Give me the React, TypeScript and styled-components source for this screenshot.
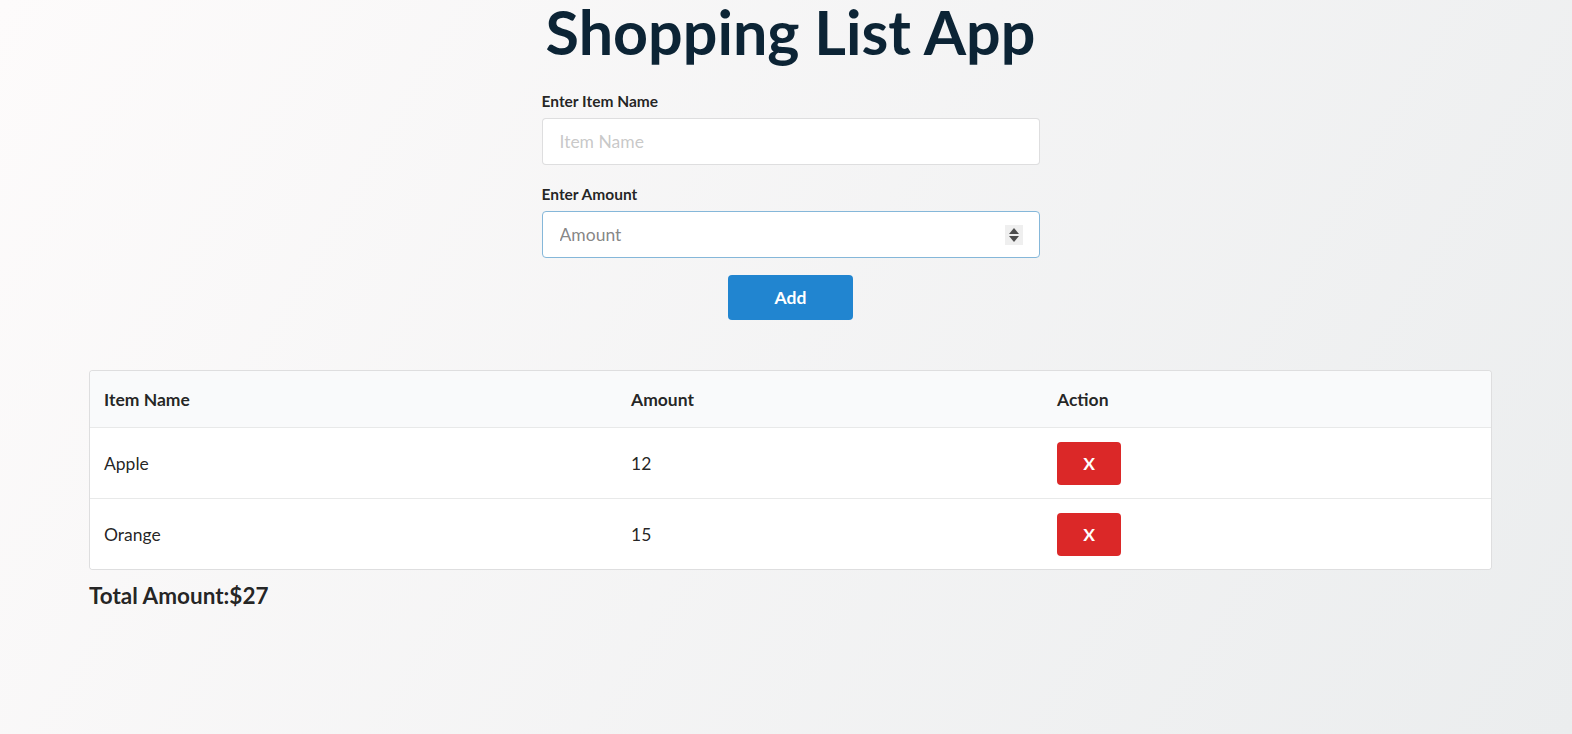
import React from "react";
import styled, { createGlobalStyle } from "styled-components";

const GlobalStyle = createGlobalStyle`
  html, body { margin: 0; padding: 0; }
  body {
    min-height: 734px;
    font-family: Lato, "Helvetica Neue", Arial, sans-serif;
    font-size: 17.5px;
    color: rgba(0,0,0,.87);
    background: linear-gradient(120deg, #fdfbfb 0%, #ebedee 100%);
    background-attachment: fixed;
  }
  * { box-sizing: border-box; }
`;

const Page = styled.div`
  width: 1403px;
  margin-left: 89px;
  display: flex;
  flex-direction: column;
`;

const Title = styled.h1`
  margin: 0;
  text-align: center;
  font-family: Lato, sans-serif;
  font-weight: 700;
  font-size: 61px;
  line-height: 64px;
  color: #0c2435;
`;

const Form = styled.form`
  width: 498px;
  margin: 27px auto 0;
  display: flex;
  flex-direction: column;
`;

const Field = styled.div<{ $last?: boolean }>`
  display: flex;
  flex-direction: column;
  margin-bottom: ${(p) => (p.$last ? 0 : 19)}px;
`;

const Label = styled.label`
  font-size: 15.5px;
  font-weight: 700;
  color: rgba(0,0,0,.87);
  margin-bottom: 7px;
  line-height: 20px;
`;

const InputWrap = styled.div`
  position: relative;
  display: flex;
`;

const Input = styled.input<{ $focused?: boolean }>`
  height: 47px;
  width: 100%;
  padding: 0 17px;
  font-family: Lato, sans-serif;
  font-size: 17.5px;
  border-radius: 4px;
  border: 1px solid ${(p) => (p.$focused ? "#85b7d9" : "rgba(34,36,38,.15)")};
  background: #fff;
  color: rgba(0,0,0,.87);
  outline: none;
  caret-color: #000;
  -moz-appearance: textfield;
  &::-webkit-inner-spin-button,
  &::-webkit-outer-spin-button { -webkit-appearance: none; margin: 0; }
  &::placeholder { color: ${(p) => (p.$focused ? "rgba(115,115,115,.87)" : "rgba(191,191,191,.87)")}; }
`;

const Spinner = styled.div`
  position: absolute;
  right: 17px;
  top: 14px;
  width: 18px;
  height: 20px;
  background: #efefef;
  display: flex;
  flex-direction: column;
  align-items: center;
  justify-content: center;
  gap: 2px;
  pointer-events: none;
`;

const ButtonRow = styled.div`
  display: flex;
  justify-content: center;
  padding-top: 17px;
`;

const Button = styled.button<{ $color: string; $w: number; $h: number }>`
  width: ${(p) => p.$w}px;
  height: ${(p) => p.$h}px;
  border: none;
  border-radius: 4px;
  background: ${(p) => p.$color};
  color: #fff;
  font-family: Lato, sans-serif;
  font-weight: 700;
  font-size: 17.5px;
  cursor: pointer;
  padding: 0;
`;

const Table = styled.div`
  margin-top: 50px;
  border: 1px solid rgba(34,36,38,.15);
  border-radius: 4px;
  background: #fff;
  overflow: hidden;
`;

const Row = styled.div<{ $head?: boolean }>`
  display: grid;
  grid-template-columns: 527px 426px 1fr;
  align-items: center;
  height: ${(p) => (p.$head ? 56 : 71)}px;
  background: ${(p) => (p.$head ? "#f9fafb" : "#fff")};
  font-weight: ${(p) => (p.$head ? 700 : 400)};
  font-size: 17.5px;
  color: rgba(0,0,0,.87);
  & + & { border-top: 1px solid rgba(34,36,38,.1); }
`;

const Cell = styled.div`
  padding: 0 14px;
`;

const Total = styled.h3`
  margin: 12px 0 0;
  font-size: 22.5px;
  font-weight: 700;
  line-height: 28px;
  color: rgba(0,0,0,.87);
`;

const items = [
  { name: "Apple", amount: 12 },
  { name: "Orange", amount: 15 },
];

function SpinArrows() {
  return (
    <Spinner>
      <svg width="10" height="6" viewBox="0 0 10 6">
        <path d="M5 0 L10 6 L0 6 Z" fill="#4d4d4d" />
      </svg>
      <svg width="10" height="6" viewBox="0 0 10 6">
        <path d="M0 0 L10 0 L5 6 Z" fill="#4d4d4d" />
      </svg>
    </Spinner>
  );
}

export default function App() {
  const total = items.reduce((s, i) => s + i.amount, 0);
  return (
    <>
      <GlobalStyle />
      <Page>
        <Title>Shopping List App</Title>
        <Form onSubmit={(e) => e.preventDefault()}>
          <Field>
            <Label>Enter Item Name</Label>
            <Input placeholder="Item Name" />
          </Field>
          <Field $last>
            <Label>Enter Amount</Label>
            <InputWrap>
              <Input type="number" placeholder="Amount" autoFocus $focused />
              <SpinArrows />
            </InputWrap>
          </Field>
          <ButtonRow>
            <Button type="submit" $color="#2185d0" $w={125} $h={45}>Add</Button>
          </ButtonRow>
        </Form>
        <Table>
          <Row $head>
            <Cell>Item Name</Cell>
            <Cell>Amount</Cell>
            <Cell>Action</Cell>
          </Row>
          {items.map((it) => (
            <Row key={it.name}>
              <Cell>{it.name}</Cell>
              <Cell>{it.amount}</Cell>
              <Cell>
                <Button $color="#db2828" $w={64} $h={43}>X</Button>
              </Cell>
            </Row>
          ))}
        </Table>
        <Total>Total Amount:${total}</Total>
      </Page>
    </>
  );
}
